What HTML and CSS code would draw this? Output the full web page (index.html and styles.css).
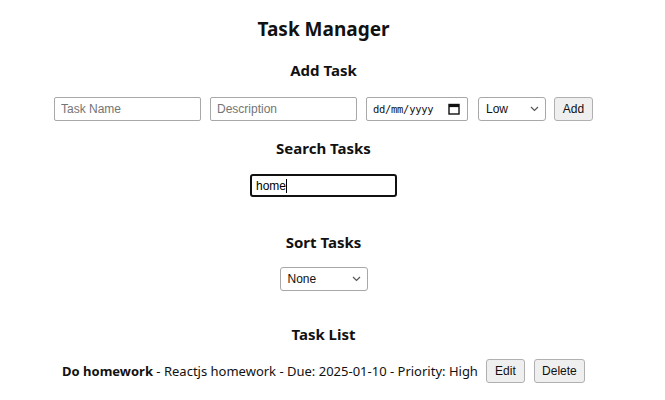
FILE: index.html
```html
<!DOCTYPE html>
<html>
<head>
<meta charset="utf-8">
<link rel="stylesheet" href="styles.css">
</head>
<body>
<div class="app">
  <h1 class="title">Task Manager</h1>
  <h2 class="section-title add-title">Add Task</h2>
  <div class="form-row">
    <div class="field text-field"><span class="placeholder">Task Name</span></div>
    <div class="field text-field"><span class="placeholder">Description</span></div>
    <div class="field date-field">
      <span class="date-text">dd/mm/yyyy</span>
      <svg class="cal-icon" width="12" height="12" viewBox="0 0 12 12"><rect x="1" y="1.5" width="10" height="9.5" fill="none" stroke="#111" stroke-width="1.4"/><rect x="1" y="1.5" width="10" height="2.6" fill="#111"/></svg>
    </div>
    <div class="field select-field priority-select">
      <span>Low</span>
      <svg class="chev" width="9" height="6" viewBox="0 0 9 6"><path d="M1 1l3.5 3.5L8 1" fill="none" stroke="#555" stroke-width="1.2"/></svg>
    </div>
    <div class="btn">Add</div>
  </div>
  <h2 class="section-title search-title">Search Tasks</h2>
  <div class="search-box"><span>home</span><span class="caret"></span></div>
  <h2 class="section-title sort-title">Sort Tasks</h2>
  <div class="field select-field sort-select">
    <span>None</span>
    <svg class="chev" width="9" height="6" viewBox="0 0 9 6"><path d="M1 1l3.5 3.5L8 1" fill="none" stroke="#555" stroke-width="1.2"/></svg>
  </div>
  <h2 class="section-title list-title">Task List</h2>
  <ul class="task-list">
    <li class="task-item">
      <span class="task-text"><strong>Do homework</strong> - Reactjs homework - Due: 2025-01-10 - Priority: High</span>
      <div class="btn edit-btn">Edit</div>
      <div class="btn delete-btn">Delete</div>
    </li>
  </ul>
</div>
</body>
</html>
```

FILE: styles.css
```css
html, body {
  margin: 0;
  padding: 0;
  background: #fff;
}
body {
  font-family: "Noto Sans", "Open Sans", sans-serif;
  color: #000;
}
.app {
  width: 647px;
  display: flex;
  flex-direction: column;
  align-items: center;
  padding-top: 16px;
}
.title {
  margin: 0;
  font-size: 19px;
  line-height: 26px;
  font-weight: 700;
  color: #111;
}
.section-title {
  margin: 0;
  font-size: 15px;
  line-height: 20px;
  font-weight: 700;
  color: #111;
}
.add-title { margin-top: 18px; }
.search-title { margin-top: 17px; }
.sort-title { margin-top: 35px; }
.list-title { margin-top: 33px; }

.form-row {
  margin-top: 17px;
  display: flex;
  gap: 9px;
  align-items: center;
}
.field {
  box-sizing: border-box;
  height: 24px;
  border: 1px solid #a8a8a8;
  border-radius: 2px;
  display: flex;
  align-items: center;
  font-family: "Liberation Sans", Arial, sans-serif;
  font-size: 12px;
  color: #111;
  background: #fff;
}
.text-field {
  width: 147px;
  padding-left: 6px;
}
.placeholder { color: #757575; }
.date-field {
  width: 102px;
  padding: 0 7px 0 6px;
  justify-content: space-between;
}
.date-text {
  font-family: "DejaVu Sans Mono", "Liberation Mono", monospace;
  font-size: 10.5px;
  letter-spacing: -0.3px;
}
.select-field {
  padding: 0 6px 0 7px;
  justify-content: space-between;
  border-radius: 3px;
}
.priority-select { width: 68px; margin-left: 1px; }
.sort-select { width: 88px; margin-top: 15px; }

.btn {
  box-sizing: border-box;
  height: 24px;
  padding: 0 8px;
  display: flex;
  align-items: center;
  justify-content: center;
  border: 1px solid #b0b0b0;
  border-radius: 3px;
  background: #efefef;
  font-family: "Liberation Sans", Arial, sans-serif;
  font-size: 12px;
  color: #111;
}
.form-row .btn { width: 39px; margin-left: -1px; }

.search-box {
  box-sizing: border-box;
  margin-top: 16px;
  width: 147px;
  height: 23px;
  border: 2px solid #111;
  border-radius: 3px;
  display: flex;
  align-items: center;
  padding-left: 4px;
  font-family: "Liberation Sans", Arial, sans-serif;
  font-size: 12px;
  color: #000;
}
.caret {
  display: inline-block;
  width: 1px;
  height: 14px;
  background: #000;
}

.task-list {
  list-style: none;
  margin: 15px 0 0;
  padding: 0;
}
.task-item {
  display: flex;
  align-items: center;
}
.task-text {
  font-size: 13px;
  line-height: 24px;
  margin-right: 8px;
  color: #111;
}
.edit-btn { width: 39px; margin-right: 9px; }
.delete-btn { width: 51px; }
```
